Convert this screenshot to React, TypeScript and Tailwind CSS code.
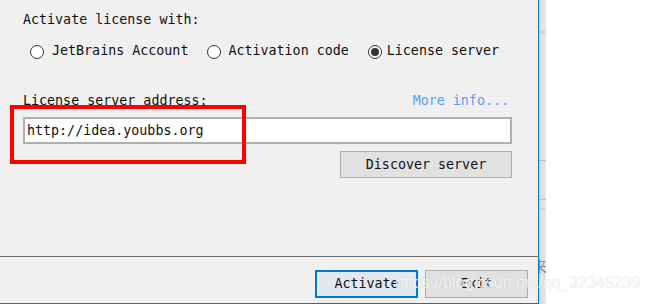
import React from "react";

const mono = { fontFamily: '"DejaVu Sans Mono", "Liberation Mono", monospace' } as const;

function Radio({ checked }: { checked?: boolean }) {
  return (
    <span className="mt-[2px] flex h-[14px] w-[14px] shrink-0 items-center justify-center rounded-full border border-[#333333] bg-white">
      {checked ? <span className="h-[8px] w-[8px] rounded-full bg-[#333333]" /> : null}
    </span>
  );
}

export default function App() {
  return (
    <div className="relative flex h-[304px] w-[647px] overflow-hidden bg-white">
      {/* dialog */}
      <div
        className="relative flex h-[304px] w-[539px] shrink-0 flex-col border-r border-b border-[#0078d7] bg-[#f0f0f0] text-[13.33px] leading-[16px] text-[#111111]"
        style={mono}
      >
        <div className="flex h-[256px] flex-col pl-[23px] pt-[12px]">
          <div>Activate license with:</div>
          <div className="mt-[15px] flex items-start">
            <span className="ml-[7px] flex items-start gap-[8px]">
              <Radio />
              <span>JetBrains Account</span>
            </span>
            <span className="ml-[19px] flex items-start gap-[7px]">
              <Radio />
              <span>Activation code</span>
            </span>
            <span className="ml-[19px] flex items-start gap-[5px]">
              <Radio checked />
              <span>License server</span>
            </span>
          </div>
          <div className="mt-[34px] flex w-[489px] justify-between pr-[3px]">
            <span>License server address:</span>
            <span className="text-[#589df6]">More info...</span>
          </div>
          <div className="mt-[8px] flex h-[27px] w-[489px] items-center border-2 border-[#b0b0b0] bg-white pl-[2px]">
            http://idea.youbbs.org
          </div>
          <div className="mt-[7px] flex w-[489px] justify-end">
            <div className="flex h-[27px] w-[172px] items-center justify-center border border-[#adadad] bg-[#e1e1e1]">
              Discover server
            </div>
          </div>
        </div>
        <div className="h-px bg-[#6e6e6e]" />
        <div className="flex flex-1 items-start justify-end gap-[7px] pr-[10px] pt-[13px]">
          <div className="flex h-[28px] w-[103px] items-center justify-center border-2 border-[#0078d7] bg-[#e3e8ee]">
            Activate
          </div>
          <div className="flex h-[28px] w-[103px] items-center justify-center border border-[#adadad] bg-[#e1e1e1]">
            Exit
          </div>
        </div>

        {/* red annotation box */}
        <div className="pointer-events-none absolute left-[10px] top-[105px] h-[59px] w-[236px] border-4 border-[#ff0000]" />
      </div>

      {/* background window edge */}
      <div className="relative h-[304px] w-[7px] shrink-0 overflow-hidden bg-gradient-to-r from-[#dcdcdc] to-[#e6e6e6]">
        <div className="absolute left-0 top-[31px] h-[2px] w-full bg-[#d2d2d2]" />
        <div className="absolute left-0 top-[160px] h-px w-full bg-[#bdbdbd]" />
        <div className="absolute left-0 top-[199px] h-px w-full bg-[#c4c4c4]" />
        <div className="absolute left-0 top-[208px] h-px w-full bg-[#d0d0d0]" />
        <div
          className="absolute left-[-7px] top-[258px] text-[15px] leading-[16px] text-[#8a8a8a]"
          style={{ fontFamily: '"Noto Sans CJK SC", sans-serif' }}
        >
          来
        </div>
      </div>
      <div className="flex-1 bg-white" />

      {/* watermark */}
      <div
        className="pointer-events-none absolute left-[395px] top-[275px] whitespace-nowrap text-[16px] leading-[16px] text-white/85"
        style={{ fontFamily: '"Liberation Sans", Arial, sans-serif', textShadow: "0 0 1px rgba(0,0,0,0.2)" }}
      >
        https://blog.csdn.net/qq_32345239
      </div>
    </div>
  );
}
